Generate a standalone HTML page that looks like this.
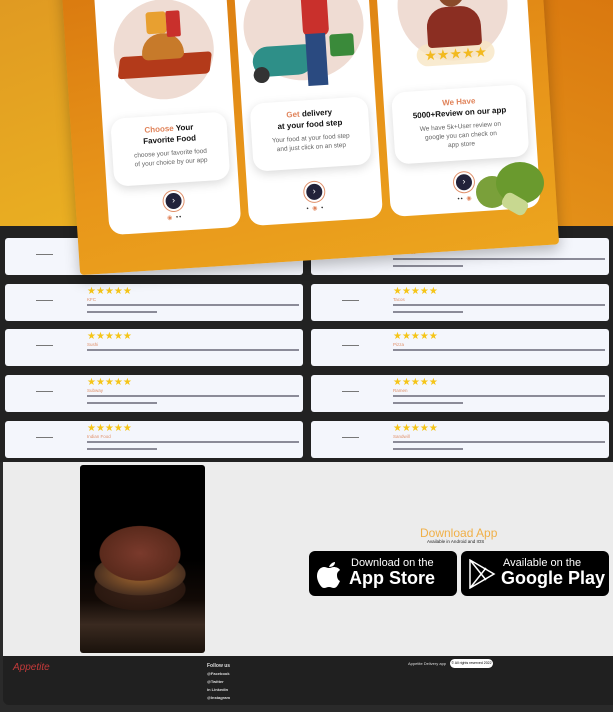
<!DOCTYPE html>
<html><head><meta charset="utf-8"><style>
*{margin:0;padding:0;box-sizing:border-box}
body{width:613px;height:712px;overflow:hidden;background:#2a2a2a;font-family:"Liberation Sans",sans-serif;position:relative}
.hero{position:absolute;left:0;top:0;width:613px;height:228px;background:linear-gradient(160deg,#e09a22 0%,#eab022 60%,#e5a61f 100%)}
.heroR{position:absolute;left:300px;top:0;width:313px;height:228px;background:linear-gradient(200deg,#d9780f,#e89a1c)}
.dark{position:absolute;left:0;top:226px;width:613px;height:236px;background:#222}
.panel{position:absolute;left:70px;top:-40px;width:480px;height:300px;transform:rotate(-3.7deg);background:linear-gradient(170deg,#d9780f,#e8961a 60%,#eca51e);border-radius:4px;box-shadow:0 6px 14px rgba(0,0,0,.25);overflow:visible}
.pc{position:absolute;top:-20px;height:282px;background:#fff;border-radius:14px;overflow:hidden}
.circ{position:absolute;left:50%;transform:translateX(-50%);width:106px;height:106px;border-radius:50%;background:#efdcd3}
.tb{position:absolute;left:8px;right:8px;top:166px;height:68px;background:#fff;border-radius:14px;box-shadow:0 3px 10px rgba(0,0,0,.15);text-align:center;font-size:8px;padding-top:8px;line-height:11px;color:#111;font-weight:bold}
.tb .o{color:#e0835a}
.tb p{font-weight:normal;color:#666;font-size:6.5px;line-height:9px;margin-top:4px}
.btn{position:absolute;left:50%;margin-left:-8px;top:244px;width:16px;height:16px;border-radius:50%;background:#22223a;box-shadow:0 0 0 2px #fff,0 0 0 3px #e0906a;color:#fff;font-size:9px;text-align:center;line-height:15px}
.dots{position:absolute;left:0;right:0;top:265px;text-align:center;font-size:6px;color:#333;letter-spacing:1px}
.card{position:absolute;width:298px;height:37px;background:#f4f6fc;border-radius:3px}
.ph{position:absolute;left:31px;top:16px;width:17px;height:2px;border-top:1px solid #777}
.st{position:absolute;left:82px;top:3px;color:#f5c518;font-size:10px;line-height:10px}
.nm{position:absolute;left:82px;top:13px;color:#e0906a;font-size:4.5px}
.lr{position:absolute;left:82px;top:20px;width:212px;height:1.5px;background:#445;opacity:.6}
.lr2{position:absolute;left:82px;top:27px;width:70px;height:1.5px;background:#445;opacity:.6}
.light{position:absolute;left:3px;top:462px;width:610px;height:194px;background:#ececec}
.burger{position:absolute;left:80px;top:465px;width:125px;height:188px;border-radius:3px;background:radial-gradient(ellipse 40% 18% at 48% 47%,#7a3a2c,#5a2a1c 80%,transparent 82%),radial-gradient(ellipse 45% 14% at 48% 58%,#a86a30,#4a3020 80%,transparent 82%),radial-gradient(ellipse 45% 14% at 48% 66%,#3a2218,#2a1810 80%,transparent 82%),linear-gradient(#000 50%,#120a06 72%,#3a2a20 85%,#1a120c)}
.foot{position:absolute;left:3px;top:656px;width:610px;height:49px;background:#202020;border-radius:0 0 0 6px}
.sb{position:absolute;top:551px;width:148px;height:45px;background:#000;border-radius:6px;color:#fff}
.sb .a{position:absolute;left:42px;top:6px;font-size:11px}
.sb .b{position:absolute;left:40px;top:17px;font-size:18px;font-weight:bold}
</style></head><body>
<div class="hero"></div><div class="heroR"></div>
<div class="dark"></div>
<div class="card" style="left:5px;top:238px"><div class="ph"></div></div>
<div class="card" style="left:311px;top:238px"><div class="ph"></div><div class="nm" style="top:12px">McDonalds</div><div class="lr"></div><div class="lr2"></div></div>
<div class="card" style="left:5px;top:284px"><div class="ph"></div><div class="st">★★★★★</div><div class="nm">KFC</div><div class="lr"></div><div class="lr2"></div></div>
<div class="card" style="left:311px;top:284px"><div class="ph"></div><div class="st">★★★★★</div><div class="nm">Tacos</div><div class="lr"></div><div class="lr2"></div></div>
<div class="card" style="left:5px;top:329px"><div class="ph"></div><div class="st">★★★★★</div><div class="nm">Sushi</div><div class="lr"></div></div>
<div class="card" style="left:311px;top:329px"><div class="ph"></div><div class="st">★★★★★</div><div class="nm">Pizza</div><div class="lr"></div></div>
<div class="card" style="left:5px;top:375px"><div class="ph"></div><div class="st">★★★★★</div><div class="nm">Subway</div><div class="lr"></div><div class="lr2"></div></div>
<div class="card" style="left:311px;top:375px"><div class="ph"></div><div class="st">★★★★★</div><div class="nm">Ramen</div><div class="lr"></div><div class="lr2"></div></div>
<div class="card" style="left:5px;top:421px"><div class="ph"></div><div class="st">★★★★★</div><div class="nm">Indian Food</div><div class="lr"></div><div class="lr2"></div></div>
<div class="card" style="left:311px;top:421px"><div class="ph"></div><div class="st">★★★★★</div><div class="nm">Sandwill</div><div class="lr"></div><div class="lr2"></div></div>

<div class="panel">
 <div class="pc" style="left:32px;width:132px">
  <div class="circ" style="top:50px;width:100px;height:100px"></div>
  <div style="position:absolute;left:20px;top:105px;width:92px;height:22px;background:#b33a1a;border-radius:4px;transform:skewX(-10deg)"></div>
  <div style="position:absolute;left:44px;top:84px;width:42px;height:26px;background:#c77a2a;border-radius:20px 20px 6px 6px"></div>
  <div style="position:absolute;left:50px;top:62px;width:20px;height:22px;background:#e8a030;border-radius:3px"></div>
  <div style="position:absolute;left:70px;top:62px;width:14px;height:26px;background:#c9302c;border-radius:2px"></div>
  <div class="tb"><span class="o">Choose</span> Your<br>Favorite Food<p>choose your favorite food<br>of your choice by our app</p></div>
  <div class="btn">›</div><div class="dots"><span style="color:#e0835a">◉</span> ••</div>
 </div>
 <div class="pc" style="left:172px;width:134px">
  <div class="circ" style="top:30px;width:120px;height:110px"></div>
  <div style="position:absolute;left:14px;top:104px;width:60px;height:30px;background:#2e8f88;border-radius:20px 10px 20px 20px"></div>
  <div style="position:absolute;left:14px;top:124px;width:16px;height:16px;background:#333;border-radius:50%"></div>
  <div style="position:absolute;left:66px;top:50px;width:26px;height:46px;background:#c9302c;border-radius:6px"></div>
  <div style="position:absolute;left:68px;top:94px;width:20px;height:52px;background:#2a4a80"></div>
  <div style="position:absolute;left:92px;top:96px;width:24px;height:22px;background:#3a8a3a;border-radius:3px"></div>
  <div class="tb" style="top:160px"><span class="o">Get</span> delivery<br>at your food step<p>Your food at your food step<br>and just click on an step</p></div>
  <div class="btn">›</div><div class="dots">• <span style="color:#e0835a">◉</span> •</div>
 </div>
 <div class="pc" style="left:314px;width:150px">
  <div class="circ" style="top:20px;width:110px;height:110px"></div>
  <div style="position:absolute;left:36px;top:112px;width:78px;height:22px;background:#f7e6c4;border-radius:20px;opacity:.8"></div>
  <div style="position:absolute;left:48px;top:76px;width:54px;height:40px;background:#8b2e22;border-radius:20px 20px 4px 4px"></div>
  <div style="position:absolute;left:60px;top:42px;width:28px;height:34px;background:#8a4a2a;border-radius:50%"></div>
  <div style="position:absolute;left:62px;top:40px;width:24px;height:12px;background:#1a1a3a;border-radius:12px 12px 0 0"></div>
  <div style="position:absolute;left:30px;top:116px;width:90px;height:14px;color:#f2b91f;font-size:14px;line-height:14px;text-align:center">★★★★★</div>
  <div class="tb" style="top:158px;height:72px"><span class="o">We Have</span><br>5000+Review on our app<p>We have 5k+User review on<br>google you can check on<br>app store</p></div>
  <div class="btn">›</div><div class="dots">•• <span style="color:#e0835a">◉</span></div>
 </div>
</div>
<div style="position:absolute;left:476px;top:176px;width:32px;height:32px;border-radius:50%;background:#7aa03a"></div>
<div style="position:absolute;left:496px;top:162px;width:48px;height:42px;border-radius:50%;background:#6a9a2e"></div>
<div style="position:absolute;left:502px;top:196px;width:26px;height:16px;background:#c8d890;border-radius:6px;transform:rotate(30deg)"></div>

<div class="light"></div>
<div class="burger"></div>
<div style="position:absolute;left:420px;top:526px;color:#f0b048;font-size:12px">Download App</div>
<div style="position:absolute;left:427px;top:539px;color:#222;font-size:4.5px">Available in Android and IOS</div>
<div class="sb" style="left:309px"><svg style="position:absolute;left:7px;top:9px" width="26" height="28" viewBox="0 0 26 28"><path d="M13 7c1-3 4-5 6-5 0 3-2 5-6 5zM21 15c0-3 2-4 3-5-1-2-4-3-6-3-2 0-3 1-5 1-2 0-3-1-5-1-3 0-7 3-7 9 0 5 4 12 7 12 2 0 3-1 5-1s3 1 5 1c3 0 5-5 6-7-2-1-3-3-3-6z" fill="#fff"/></svg><div class="a">Download on the</div><div class="b">App Store</div></div>
<div class="sb" style="left:461px"><svg style="position:absolute;left:7px;top:8px" width="28" height="30" viewBox="0 0 28 30"><path d="M2 1L26 15 2 29ZM2 1L18 21M2 29L18 9" fill="none" stroke="#fff" stroke-width="1.5"/></svg><div class="a">Available on the</div><div class="b">Google Play</div></div>

<div class="foot">
 <div style="position:absolute;left:10px;top:6px;color:#c43a3a;font-style:italic;font-size:10px">Appetite</div>
 <div style="position:absolute;left:204px;top:6px;color:#ddd;font-size:5px;font-weight:bold;line-height:8px">Follow us<br><span style="font-size:4px">@Facebook<br>@Twitter<br>in Linkedin<br>@Instagram</span></div>
 <div style="position:absolute;left:405px;top:5px;color:#ddd;font-size:4px">Appetite Delivery app</div>
 <div style="position:absolute;left:447px;top:3px;width:43px;height:9px;background:#fff;border-radius:5px;color:#000;font-size:3.5px;text-align:center;line-height:9px">© All rights reserved 2022</div>
</div>
</body></html>
